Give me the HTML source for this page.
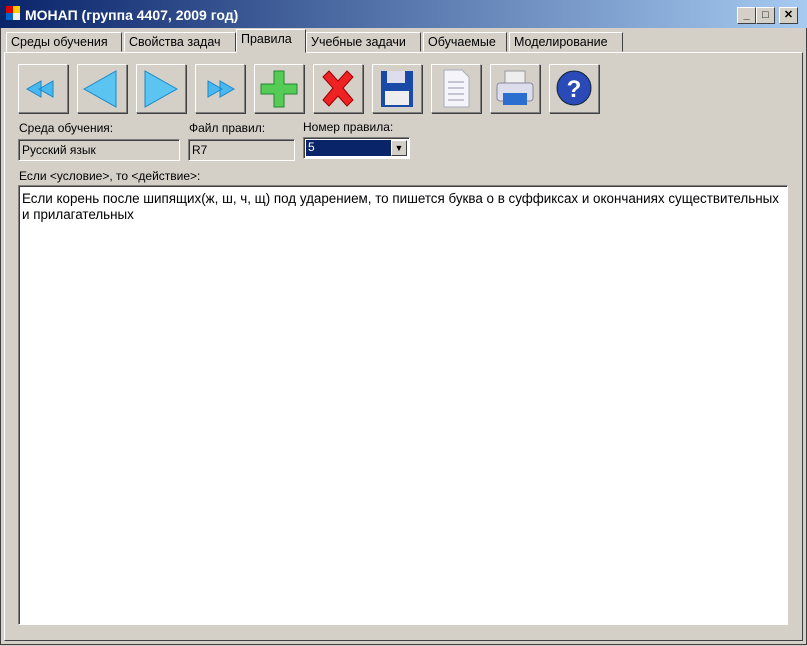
<!DOCTYPE html>
<html><head><meta charset="utf-8"><style>
body{margin:0;width:807px;height:646px;overflow:hidden;background:#d4d0c8;font-family:"Liberation Sans",sans-serif;font-size:12px;position:relative}
.a{position:absolute}
.title{left:0;top:0;width:807px;height:28px;background:linear-gradient(90deg,#0a246a,#a6caf0);}
.tb{width:17px;height:15px;background:#d4d0c8;border:1px solid;border-color:#fff #404040 #404040 #fff;top:7px;font-size:11px;font-weight:bold;text-align:center;line-height:14px}
.tab{top:32px;height:20px;border:1px solid;border-color:#fff #404040 transparent #fff;line-height:19px;font-size:12.5px;padding:0 4px;box-sizing:border-box}
.btn{top:64px;width:50px;height:49px;border:1px solid;border-color:#fff #808080 #808080 #fff;box-sizing:border-box;box-shadow:1px 1px 0 #404040}
.fld{height:22px;border:1px solid;border-color:#808080 #fff #fff #808080;box-sizing:border-box;box-shadow:inset 1px 1px 0 #404040;padding:3px 0 0 3px}
</style></head><body>
<div class="a" style="left:0;top:0;width:805px;height:644px;border:1px solid #404040;border-top:none"></div>
<div class="a title"></div>
<div class="a" style="left:6px;top:6px;width:7px;height:7px;background:#d00"></div><div class="a" style="left:13px;top:6px;width:7px;height:7px;background:#fc0"></div><div class="a" style="left:6px;top:13px;width:7px;height:7px;background:#06c"></div><div class="a" style="left:13px;top:13px;width:7px;height:7px;background:#eee"></div>
<div class="a" style="left:25px;top:7px;color:#fff;font-weight:bold;font-size:14px">МОНАП (группа 4407, 2009 год)</div>
<div class="a tb" style="left:737px">_</div><div class="a tb" style="left:756px">□</div><div class="a tb" style="left:779px">✕</div>
<div class="a" style="left:4px;top:52px;width:797px;height:587px;border:1px solid;border-color:#fff #404040 #404040 #fff"></div>
<div class="a tab" style="left:6px;width:116px">Среды обучения</div>
<div class="a tab" style="left:124px;width:112px">Свойства задач</div>
<div class="a tab" style="left:236px;top:29px;height:24px;width:70px;background:#d4d0c8">Правила</div>
<div class="a tab" style="left:306px;width:115px">Учебные задачи</div>
<div class="a tab" style="left:423px;width:84px">Обучаемые</div>
<div class="a tab" style="left:509px;width:114px">Моделирование</div>
<div class="a btn" style="left:18px"><svg width="48" height="47"><path d="M8 24l14-8v16zM20 24l14-8v16z" fill="#4ab8ee" stroke="#1a88c8"/></svg></div>
<div class="a btn" style="left:77px"><svg width="48" height="47"><path d="M6 24l32-18v36z" fill="#5cc4f0" stroke="#1a88c8"/></svg></div>
<div class="a btn" style="left:136px"><svg width="48" height="47"><path d="M40 24L8 6v36z" fill="#5cc4f0" stroke="#1a88c8"/></svg></div>
<div class="a btn" style="left:195px"><svg width="48" height="47"><path d="M26 24l-14-8v16zM38 24l-14-8v16z" fill="#4ab8ee" stroke="#1a88c8"/></svg></div>
<div class="a btn" style="left:254px"><svg width="48" height="47"><path d="M19 6h10v13h13v10H29v13H19V29H6V19h13z" fill="#5c5" stroke="#283"/></svg></div>
<div class="a btn" style="left:313px"><svg width="48" height="47"><path d="M9 12l6-6 9 10 9-10 6 6-10 11 10 12-6 6-9-10-9 10-6-6 10-12z" fill="#e22" stroke="#900"/></svg></div>
<div class="a btn" style="left:372px"><svg width="48" height="47"><rect x="8" y="6" width="32" height="36" fill="#1a4aa8"/><rect x="14" y="6" width="18" height="12" fill="#dde"/><rect x="12" y="26" width="24" height="14" fill="#eee"/></svg></div>
<div class="a btn" style="left:431px"><svg width="48" height="47"><path d="M12 5h18l7 7v30H12z" fill="#f4f4fa" stroke="#aab"/><path d="M16 17h16M16 23h16M16 29h16M16 35h16" stroke="#99a"/></svg></div>
<div class="a btn" style="left:490px"><svg width="48" height="47"><rect x="14" y="6" width="20" height="14" fill="#eee" stroke="#999"/><rect x="6" y="18" width="36" height="18" rx="3" fill="#dde" stroke="#889"/><rect x="12" y="28" width="24" height="12" fill="#2a6fd0"/></svg></div>
<div class="a btn" style="left:549px"><svg width="48" height="47"><circle cx="24" cy="23" r="17" fill="#2a4ab8" stroke="#123"/><text x="24" y="32" font-size="24" font-weight="bold" fill="#fff" text-anchor="middle" font-family="Liberation Sans">?</text></svg></div>
<div class="a" style="left:19px;top:121px">Среда обучения:</div>
<div class="a" style="left:189px;top:121px">Файл правил:</div>
<div class="a" style="left:303px;top:120px">Номер правила:</div>
<div class="a fld" style="left:18px;top:139px;width:162px">Русский язык</div>
<div class="a fld" style="left:188px;top:139px;width:107px">R7</div>
<div class="a fld" style="left:303px;top:137px;width:107px;background:#fff"><div class="a" style="left:2px;top:2px;width:84px;height:16px;background:#0a246a;color:#fff;padding-left:2px">5</div><div class="a" style="left:87px;top:2px;width:16px;height:16px;background:#d4d0c8;border:1px solid;border-color:#fff #404040 #404040 #fff;box-sizing:border-box;font-size:9px;text-align:center;line-height:15px">▼</div></div>
<div class="a" style="left:19px;top:169px">Если &lt;условие&gt;, то &lt;действие&gt;:</div>
<div class="a fld" style="left:18px;top:185px;width:770px;height:440px;background:#fff;line-height:16px;padding:5px 0 0 3px;font-size:13.4px;white-space:nowrap">Если корень после шипящих(ж, ш, ч, щ) под ударением, то пишется буква о в суффиксах и окончаниях существительных<br>и прилагательных</div>
</body></html>
